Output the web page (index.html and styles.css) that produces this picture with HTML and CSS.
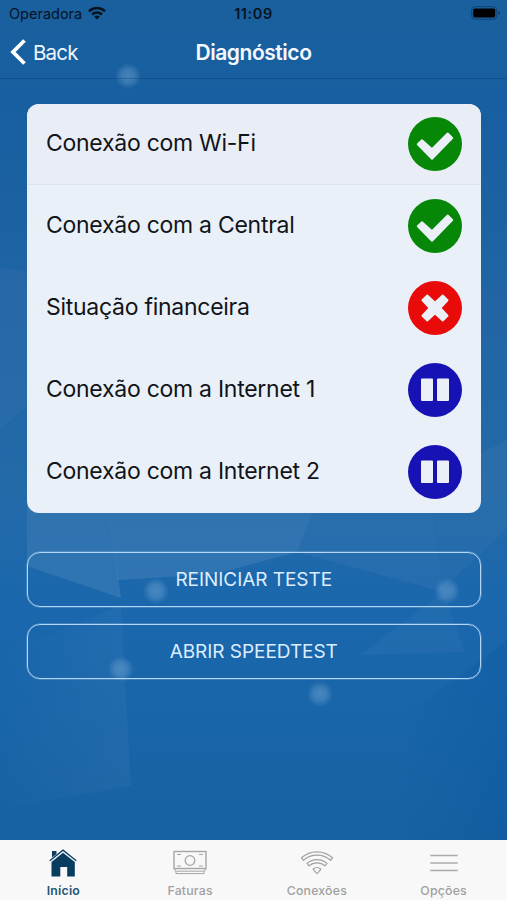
FILE: index.html
```html
<!DOCTYPE html>
<html lang="pt-BR">
<head>
    <meta charset="UTF-8">
    <meta name="viewport" content="width=device-width, initial-scale=1.0">
    <title>Diagnóstico</title>
    <link rel="stylesheet" href="styles.css">
</head>
<body>
    <svg class="backdrop" viewBox="0 0 507 900" preserveAspectRatio="none" aria-hidden="true">
        <defs>
            <linearGradient id="base" x1="0" y1="0" x2="0" y2="1">
                <stop offset="0" stop-color="#1a609e"/>
                <stop offset="0.12" stop-color="#175fa1"/>
                <stop offset="0.35" stop-color="#2165a5"/>
                <stop offset="0.55" stop-color="#236aa9"/>
                <stop offset="0.68" stop-color="#1a67ad"/>
                <stop offset="0.8" stop-color="#1965a9"/>
                <stop offset="1" stop-color="#175f9f"/>
            </linearGradient>
            <linearGradient id="facet" x1="0" y1="0" x2="0" y2="1">
                <stop offset="0" stop-color="#fff" stop-opacity="0.05"/>
                <stop offset="1" stop-color="#fff" stop-opacity="0.09"/>
            </linearGradient>
            <linearGradient id="fade" x1="1" y1="0" x2="0" y2="0">
                <stop offset="0" stop-color="#fff" stop-opacity="0.035"/>
                <stop offset="1" stop-color="#fff" stop-opacity="0"/>
            </linearGradient>
            <linearGradient id="shade" x1="0" y1="0" x2="1" y2="0">
                <stop offset="0" stop-color="#00509a" stop-opacity="0"/>
                <stop offset="1" stop-color="#00509a" stop-opacity="0.25"/>
            </linearGradient>
            <radialGradient id="spot">
                <stop offset="0" stop-color="#8fbbe0" stop-opacity="0.38"/>
                <stop offset="0.5" stop-color="#8fbbe0" stop-opacity="0.29"/>
                <stop offset="1" stop-color="#8fbbe0" stop-opacity="0"/>
            </radialGradient>
        </defs>
        <rect width="507" height="900" fill="url(#base)"/>
        <path d="M0 268L27 272V405L0 430Z" fill="#fff" fill-opacity="0.03"/>
        <path d="M27 480H104L121 598L27 566Z" fill="url(#facet)"/>
        <path d="M104 480H325L297 552L215 574L118 580Z" fill="url(#facet)"/>
        <path d="M325 480H428L444 592L297 552Z" fill="#fff" fill-opacity="0.04"/>
        <path d="M428 480L507 440V528L444 588Z" fill="#fff" fill-opacity="0.03"/>
        <path d="M0 656L121 605L126 700L131 786L0 808Z" fill="url(#fade)"/>
        <path d="M444 592L465 652L360 655Z" fill="#fff" fill-opacity="0.03"/>
        <path d="M413 710L507 640V840H395Z" fill="url(#shade)"/>
        <g fill="url(#spot)">
            <circle cx="128" cy="76" r="13"/>
            <circle cx="156" cy="591" r="13"/>
            <circle cx="447" cy="591" r="13"/>
            <circle cx="121" cy="669" r="13"/>
            <circle cx="320" cy="694" r="13"/>
        </g>
    </svg>

    <div class="app">
        <div class="status-bar">
            <div class="carrier">
                <span>Operadora</span>
                <svg width="18" height="14" viewBox="0 0 18 14">
                    <g fill="none" stroke="#07131f" stroke-width="2.5">
                        <path d="M1 5.3a11.3 11.3 0 0 1 16 0"/>
                        <path d="M4.1 8.5a6.9 6.9 0 0 1 9.8 0"/>
                    </g>
                    <path d="M9 13.6L6.2 10.8a4 4 0 0 1 5.6 0Z" fill="#07131f"/>
                </svg>
            </div>
            <div class="clock">11:09</div>
            <div class="battery">
                <svg width="30" height="14" viewBox="0 0 30 14">
                    <rect x="0.7" y="0.7" width="25" height="12.6" rx="3.5" fill="none" stroke="#0b385f" stroke-opacity="0.7"/>
                    <rect x="2.2" y="2.4" width="22" height="9.2" rx="1.8" fill="#000"/>
                    <path d="M27.3 5v4c2-.7 2-3.3 0-4Z" fill="#0b385f"/>
                </svg>
            </div>
        </div>

        <header class="nav-bar">
            <a href="#" class="back">
                <svg width="17" height="26" viewBox="0 0 17 26">
                    <path d="M14.500 1.500L3 13L14.500 24.500" fill="none" stroke="#fff" stroke-width="3.800"/>
                </svg>
                <span>Back</span>
            </a>
            <h1>Diagnóstico</h1>
        </header>

        <main>
            <ul class="card">
                <li>
                    <span>Conexão com Wi-Fi</span>
                    <svg class="status" viewBox="0 0 54 54">
                        <circle cx="27" cy="27" r="27" fill="#078707"/>
                        <path d="M9.800 27.300L14 23.200L24 32.200L39.700 16.500L44.200 21L24 41.800Z" class="mark"/>
                    </svg>
                </li>
                <li>
                    <span>Conexão com a Central</span>
                    <svg class="status" viewBox="0 0 54 54">
                        <circle cx="27" cy="27" r="27" fill="#078707"/>
                        <path d="M9.800 27.300L14 23.200L24 32.200L39.700 16.500L44.200 21L24 41.800Z" class="mark"/>
                    </svg>
                </li>
                <li>
                    <span>Situação financeira</span>
                    <svg class="status" viewBox="0 0 54 54">
                        <circle cx="27" cy="27" r="27" fill="#e90a0a"/>
                        <path d="M14.500 19.300L19.300 14.500L27 21.700L34.700 14.500L39.500 19.300L32.300 27L39.500 34.700L34.700 39.500L27 32.300L19.300 39.500L14.500 34.700L21.700 27Z" class="mark"/>
                    </svg>
                </li>
                <li>
                    <span>Conexão com a Internet 1</span>
                    <svg class="status" viewBox="0 0 54 54">
                        <circle cx="27" cy="27" r="27" fill="#1712b4"/>
                        <path d="M14 16.500h10v20.500H14ZM30 16.500h10v20.500H30Z" class="mark"/>
                    </svg>
                </li>
                <li>
                    <span>Conexão com a Internet 2</span>
                    <svg class="status" viewBox="0 0 54 54">
                        <circle cx="27" cy="27" r="27" fill="#1712b4"/>
                        <path d="M14 16.500h10v20.500H14ZM30 16.500h10v20.500H30Z" class="mark"/>
                    </svg>
                </li>
            </ul>
            <div class="actions">
                <button class="btn">REINICIAR TESTE</button>
                <button class="btn">ABRIR SPEEDTEST</button>
            </div>
        </main>

        <nav class="tab-bar">
            <a href="#" class="tab active">
                <svg width="34" height="30" viewBox="0 0 34 30">
                    <path d="M5.500 14L17 4.800L28.800 14V28.500H21.200V19H14.300V28.500H5.500Z" fill="#083d60"/>
                    <path d="M6 3h4.500v3L6 9.400Z" fill="#083d60"/>
                    <path d="M3.800 12.800L17 2.200L30.300 12.800" fill="none" stroke="#083d60" stroke-width="1.300"/>
                </svg>
                <span>Início</span>
            </a>
            <a href="#" class="tab">
                <svg width="34" height="30" viewBox="0 0 34 30" fill="none" stroke="#a5a5a5">
                    <rect x="1" y="3.500" width="32" height="17" stroke-width="1.400"/>
                    <circle cx="17" cy="12.500" r="4.800" stroke-width="1.300"/>
                    <path d="M4 6.500h4M26 6.500h4M4 18h4M26 18h4"/>
                    <path d="M2 20.500V23.200H32V20.500M3 24V25.600H31V24" stroke-width="1"/>
                </svg>
                <span>Faturas</span>
            </a>
            <a href="#" class="tab">
                <svg width="34" height="30" viewBox="0 0 34 30" fill="none" stroke="#a2a2a2" stroke-width="1.200" stroke-linejoin="round">
                    <path d="M1.500 9.800a23 23 0 0 1 31 0l-2 2.500a20 20 0 0 0-27 0Z"/>
                    <path d="M7 15.400a15 15 0 0 1 20 0l-2 2.500a12 12 0 0 0-16 0Z"/>
                    <path d="M13.200 21a5.800 5.800 0 0 1 7.600 0q-.5 1.800-3.800 4.600q-3.300-2.800-3.800-4.600Z"/>
                </svg>
                <span>Conexões</span>
            </a>
            <a href="#" class="tab">
                <svg width="34" height="30" viewBox="0 0 34 30">
                    <path d="M3.300 7.500H30.700M3.300 15H30.700M3.300 22.500H30.700" stroke="#aaa" stroke-width="1.500"/>
                </svg>
                <span>Opções</span>
            </a>
        </nav>
    </div>
</body>
</html>
```
FILE: styles.css
```css
* {
    box-sizing: border-box;
}
body {
    margin: 0;
    font-family: Inter, 'Liberation Sans', sans-serif;
    background: #1a629f;
    color: #111419;
}
.backdrop {
    position: absolute;
    top: 0;
    left: 0;
    width: 100%;
    height: 900px;
}
.app {
    position: relative;
    height: 900px;
    display: flex;
    flex-direction: column;
}
.status-bar {
    height: 27px;
    display: grid;
    grid-template-columns: 1fr auto 1fr;
    align-items: center;
    padding: 0 6px 0 9px;
    color: #07131f;
    font-size: 14.5px;
}
.carrier {
    display: flex;
    align-items: center;
    gap: 6px;
    margin-top: -1px;
}
.carrier svg {
    flex: none;
}
.clock {
    font-weight: 600;
    letter-spacing: 0.6px;
    margin-right: 3px;
}
.battery {
    display: flex;
    justify-content: flex-end;
    margin-top: -1px;
}
.nav-bar {
    height: 52px;
    display: grid;
    grid-template-columns: 1fr auto 1fr;
    align-items: center;
    padding: 0 10px 1px;
    border-bottom: 1px solid rgba(0, 50, 100, 0.3);
}
.back {
    display: flex;
    align-items: center;
    gap: 6px;
    color: #eef6ff;
    text-decoration: none;
    font-size: 20.5px;
    letter-spacing: -0.8px;
}
.nav-bar h1 {
    margin: 0;
    color: #f4f9ff;
    font-size: 21px;
    font-weight: 600;
    letter-spacing: -0.45px;
}
main {
    flex: 1;
    padding: 24.5px 26px 0 26.5px;
}
.card {
    list-style: none;
    margin: 0;
    padding: 0;
    height: 409px;
    display: flex;
    flex-direction: column;
    border-radius: 12px;
    background: #eaf0f8;
    overflow: hidden;
}
.card li {
    height: 82px;
    display: flex;
    align-items: center;
    justify-content: space-between;
    padding: 0 19.5px;
    font-size: 23px;
    letter-spacing: -0.27px;
    white-space: nowrap;
}
.card li span {
    margin-top: -2px;
}
.card li:first-child {
    height: 81px;
    background: #e9edf6;
    border-bottom: 1px solid #dce3ed;
}
.status {
    width: 54px;
    height: 54px;
}
.mark {
    fill: #ebf0f8;
    stroke: #ebf0f8;
    stroke-width: 2;
    stroke-linejoin: round;
}
.actions {
    display: flex;
    flex-direction: column;
    gap: 17px;
    margin-top: 39px;
}
.btn {
    height: 55px;
    border: 1px solid #b3d6f5;
    border-radius: 13px;
    box-shadow: 0 0 0 0.5px rgba(179, 214, 245, 0.5);
    background: transparent;
    color: #dcedff;
    font-family: inherit;
    font-size: 19px;
    letter-spacing: -0.05px;
}
.tab-bar {
    height: 60px;
    display: flex;
    background: #f8f8f8;
}
.tab {
    flex: 1;
    display: flex;
    flex-direction: column;
    align-items: center;
    padding-top: 8px;
    color: #a0a0a0;
    text-decoration: none;
    font-size: 12.3px;
    font-weight: 500;
    line-height: 16px;
    letter-spacing: 0.2px;
}
.tab span {
    margin-top: 5px;
}
.tab.active {
    color: #235476;
    font-weight: 600;
}
```
